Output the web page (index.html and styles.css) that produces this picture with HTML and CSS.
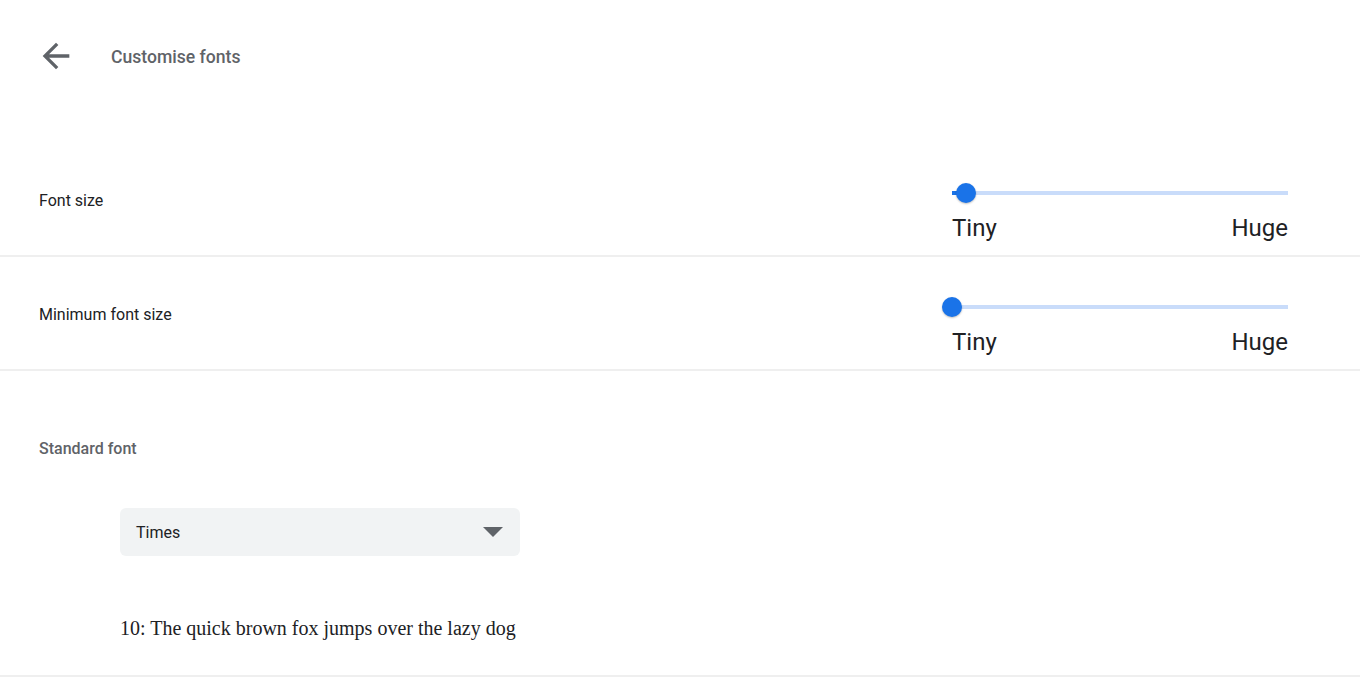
FILE: index.html
```html
<!DOCTYPE html>
<html>
<head>
<meta charset="utf-8">
<link rel="stylesheet" href="styles.css">
</head>
<body>
<div class="page">
  <header class="header">
    <button class="back" aria-label="Back">
      <svg viewBox="0 0 24 24" width="40" height="40"><path fill="#5f6368" d="M20 11H7.83l5.59-5.59L12 4l-8 8 8 8 1.41-1.41L7.83 13H20v-2z"/></svg>
    </button>
    <h1 class="title">Customise fonts</h1>
  </header>

  <section class="rows">
    <div class="row">
      <div class="label">Font size</div>
      <div class="slider">
        <div class="track">
          <div class="fill" style="width:14px"></div>
          <div class="thumb" style="left:14px"></div>
        </div>
        <div class="ticks"><span>Tiny</span><span>Huge</span></div>
      </div>
    </div>
    <div class="row">
      <div class="label">Minimum font size</div>
      <div class="slider">
        <div class="track">
          <div class="fill" style="width:0px"></div>
          <div class="thumb" style="left:0px"></div>
        </div>
        <div class="ticks"><span>Tiny</span><span>Huge</span></div>
      </div>
    </div>
    <div class="font-section">
      <h2 class="section-title">Standard font</h2>
      <div class="select">
        <span>Times</span>
        <svg class="caret" viewBox="0 0 20 10" width="20" height="10"><path fill="#5f6368" d="M0 0h20L10 10z"/></svg>
      </div>
      <p class="sample">10: The quick brown fox jumps over the lazy dog</p>
    </div>
  </section>
</div>
</body>
</html>
```

FILE: styles.css
```css
html, body {
  margin: 0;
  padding: 0;
  background: #fff;
}
body {
  font-family: Roboto, "Liberation Sans", sans-serif;
  color: #202124;
}
.header {
  height: 112px;
  display: flex;
  align-items: center;
  padding-left: 36px;
  box-sizing: border-box;
}
.back {
  width: 40px;
  height: 40px;
  padding: 0;
  border: 0;
  background: none;
  display: flex;
}
.title {
  margin: 2px 0 0 35px;
  font-size: 17.6px;
  font-weight: 500;
  color: #5f6368;
}
.rows {
  margin-top: 31px;
}
.row {
  height: 114px;
  border-bottom: 2px solid #efefef;
  display: flex;
  justify-content: space-between;
  padding: 0 72px 0 39px;
  box-sizing: border-box;
}
.label {
  font-size: 16px;
  line-height: 20px;
  align-self: center;
  margin-top: 4px;
}
.slider {
  width: 336px;
  padding-top: 48px;
}
.track {
  position: relative;
  height: 4px;
  background: #c9dcfa;
}
.fill {
  height: 4px;
  background: #1a73e8;
}
.thumb {
  position: absolute;
  top: -8px;
  width: 20px;
  height: 20px;
  margin-left: -10px;
  border-radius: 50%;
  background: #1a73e8;
  box-shadow: 0 1px 2px rgba(0,0,0,0.25);
}
.ticks {
  display: flex;
  justify-content: space-between;
  font-size: 24px;
  line-height: 28px;
  margin-top: 19px;
  color: #202124;
}
.font-section {
  height: 306px;
  border-bottom: 2px solid #efefef;
  box-sizing: border-box;
  padding-top: 68px;
}
.section-title {
  margin: 0 0 0 39px;
  font-size: 16px;
  font-weight: 500;
  line-height: 20px;
  color: #5f6368;
}
.select {
  margin: 49px 0 0 120px;
  width: 400px;
  height: 48px;
  box-sizing: border-box;
  background: #f1f3f4;
  border-radius: 6px;
  display: flex;
  align-items: center;
  justify-content: space-between;
  padding: 0 17px 0 16px;
  font-size: 16px;
}
.sample {
  margin: 60px 0 0 120px;
  font-family: "Liberation Serif", "Times New Roman", serif;
  font-size: 20px;
  line-height: 24px;
}
```
